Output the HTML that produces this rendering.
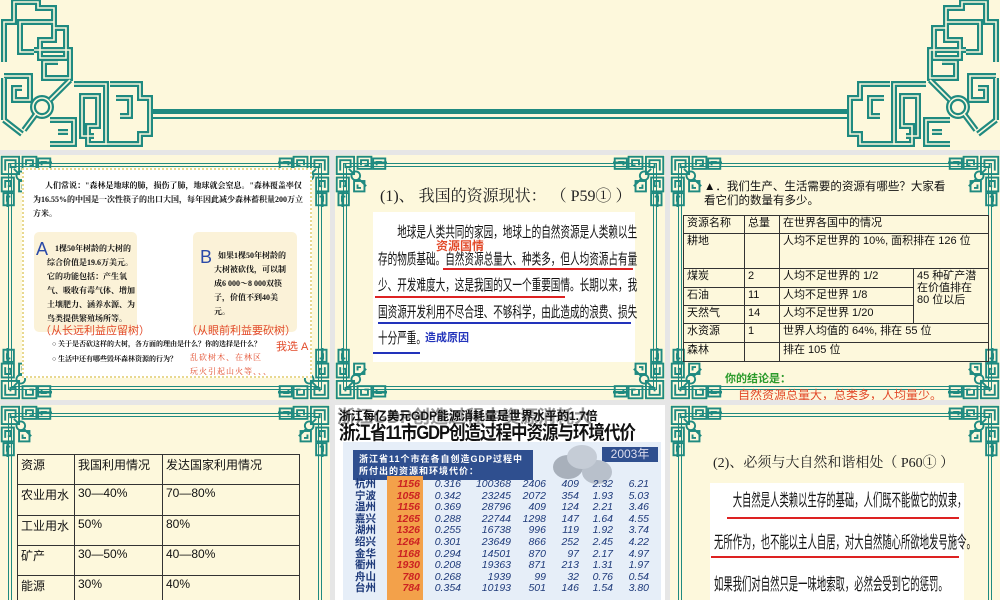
<!DOCTYPE html>
<html><head><meta charset="utf-8">
<style>
*{margin:0;padding:0;box-sizing:border-box}
html,body{width:1000px;height:600px;overflow:hidden}
body{background:#e6e6e6;position:relative;font-family:"Liberation Serif","Noto Serif CJK SC",serif;color:#111}
.a{position:absolute}
.panel{position:absolute;background:#fdf8dc;overflow:hidden}
.sans{font-family:"Liberation Sans","Noto Sans CJK SC",sans-serif}
table{border-collapse:collapse}
td{border:1px solid #333;vertical-align:top;padding:1px 3px}
.sq{font-family:"Noto Sans CJK SC",sans-serif;transform-origin:0 0;white-space:nowrap}
.nt td{border:none;padding:0;height:11.6px;line-height:11.6px;white-space:nowrap;text-align:right}
</style></head><body>
<svg width="0" height="0" style="position:absolute">
<defs>
<symbol id="orn" viewBox="0 0 60 60">
<g fill="none" stroke="#1f8a80" stroke-width="2.2">
<rect x="2" y="2" width="20" height="20"/><path d="M6 18V6h12v8h-6v-4"/>
<rect x="26" y="2" width="16" height="14"/><path d="M30 12V6h8v6h-4"/>
<rect x="44" y="4" width="14" height="12"/><path d="M48 12V8h6"/>
<rect x="2" y="26" width="14" height="16"/><path d="M6 38V30h6v6h-3"/>
<rect x="4" y="44" width="12" height="14"/><path d="M8 54V48h4"/>
<circle cx="24" cy="24" r="5"/><path d="M28 28l8 8M20 20l-4-4"/>
<rect x="22" y="30" width="12" height="12"/><path d="M30 38h-4v-4"/>
</g>
<path d="M42 9H60M9 42V60" stroke="#1f8a80" stroke-width="3"/>
</symbol>
<g id="big">
<g fill="none">
<path d="M4 62V22h10V2h24v6h16v20h12v30H40V40h14V22H20v30h14"/>
<path d="M34 50h36v28H44V62h14"/>
<path d="M4 76h26v24H14V88h8"/>
<path d="M4 120V78M4 120l18 14"/>
<path d="M50 120h24v24H50M58 132h10"/>
<path d="M74 84h32v60H88v-18h10v-30H82v40h12"/>
<path d="M110 84h30v14h10v36h-10v10h-50M116 98h14v18h-10"/>
<path d="M36 114L24 130M50 100l20-20"/>
<circle cx="42" cy="107" r="9"/>
</g>
</g>
</defs></svg>

<!-- top slide -->
<div class="panel" style="left:0;top:0;width:1000px;height:150px">
  <div class="a" style="left:150px;top:109px;width:700px;height:5px;background:#1f8a80"></div>
  <div class="a" style="left:150px;top:117px;width:700px;height:2px;background:#1f8a80"></div>
  <svg class="a" style="left:0;top:0" width="160" height="150">
    <use href="#big" stroke="#1f8a80" stroke-width="6"/>
    <g stroke="#fdf8dc" stroke-width="1.6"><use href="#big"/></g>
  </svg>
  <svg class="a" style="left:840px;top:0" width="160" height="150">
    <g transform="translate(160,0) scale(-1,1)">
    <use href="#big" stroke="#1f8a80" stroke-width="6"/>
    <g stroke="#fdf8dc" stroke-width="1.6"><use href="#big"/></g></g>
  </svg>
</div>

<!-- Panel 1 -->
<div class="panel" style="left:0;top:155px;width:330px;height:245px">
  <div class="a" style="left:8px;top:8px;width:314px;height:227px;border:4px double #1f8a80"></div>
  <svg class="a" style="left:0;top:0" width="52" height="52"><use href="#orn" width="52" height="52"/></svg>
  <svg class="a" style="left:278px;top:0" width="52" height="52"><use href="#orn" width="52" height="52" transform="translate(52,0) scale(-1,1)"/></svg>
  <svg class="a" style="left:0;top:193px" width="52" height="52"><use href="#orn" width="52" height="52" transform="translate(0,52) scale(1,-1)"/></svg>
  <svg class="a" style="left:278px;top:193px" width="52" height="52"><use href="#orn" width="52" height="52" transform="translate(52,52) scale(-1,-1)"/></svg>
  <div class="a" style="left:22px;top:13px;width:290px;height:210px;background:#fff;border:2px dotted #e8d890"></div>
  <div class="a" style="left:33px;top:24px;width:272px;font-size:8px;line-height:14px;font-weight:bold">&nbsp;&nbsp;&nbsp;&nbsp;&nbsp;&nbsp;人们常说："森林是地球的肺，损伤了肺，地球就会窒息。"森林覆盖率仅为16.55%的中国是一次性筷子的出口大国，每年因此减少森林蓄积量200万立方米。</div>
  <div class="a" style="left:34px;top:77px;width:103px;height:100px;background:#fbf2d8;border-radius:5px"></div>
  <div class="a" style="left:193px;top:77px;width:104px;height:100px;background:#fbf2d8;border-radius:5px"></div>
  <div class="a sans" style="left:36px;top:84px;font-size:18px;color:#2b4aa8">A</div>
  <div class="a sans" style="left:200px;top:92px;font-size:18px;color:#2b4aa8">B</div>
  <div class="a" style="left:47px;top:87px;width:88px;font-size:8px;line-height:14px;font-weight:bold">&nbsp;&nbsp;&nbsp;&nbsp;1棵50年树龄的大树的综合价值是19.6万美元。它的功能包括：产生氧气、吸收有毒气体、增加土壤肥力、涵养水源、为鸟类提供繁殖场所等。</div>
  <div class="a" style="left:214px;top:94px;width:75px;font-size:8px;line-height:14px;font-weight:bold">&nbsp;&nbsp;如果1棵50年树龄的大树被砍伐，可以制成6 000～8 000双筷子，价值不到40美元。</div>
  <div class="a sans" style="left:40px;top:167px;font-size:11px;color:#e24a2a">（从长远利益应留树）</div>
  <div class="a sans" style="left:186px;top:167px;font-size:11px;color:#e24a2a">（从眼前利益要砍树）</div>
  <div class="a" style="left:52px;top:184px;font-size:7px;font-weight:bold">○ 关于是否砍这样的大树，各方面的理由是什么？你的选择是什么？</div>
  <div class="a sans" style="left:276px;top:183px;font-size:11px;color:#e24a2a">我选 A</div>
  <div class="a" style="left:52px;top:199px;font-size:7px;font-weight:bold">○ 生活中还有哪些毁坏森林资源的行为？</div>
  <div class="a" style="left:190px;top:196px;font-size:8px;color:#e24a2a;letter-spacing:1px;line-height:14px">乱砍树木、在林区<br>玩火引起山火等、、、</div>
</div>

<!-- Panel 2 -->
<div class="panel" style="left:335px;top:155px;width:330px;height:245px">
  <div class="a" style="left:8px;top:8px;width:314px;height:227px;border:4px double #1f8a80"></div>
  <svg class="a" style="left:0;top:0" width="52" height="52"><use href="#orn" width="52" height="52"/></svg>
  <svg class="a" style="left:278px;top:0" width="52" height="52"><use href="#orn" width="52" height="52" transform="translate(52,0) scale(-1,1)"/></svg>
  <svg class="a" style="left:0;top:193px" width="52" height="52"><use href="#orn" width="52" height="52" transform="translate(0,52) scale(1,-1)"/></svg>
  <svg class="a" style="left:278px;top:193px" width="52" height="52"><use href="#orn" width="52" height="52" transform="translate(52,52) scale(-1,-1)"/></svg>
  <div class="a" style="left:45px;top:28px;font-size:16px;color:#222;white-space:nowrap">(1)、 我国的资源现状： （ P59① ）</div>
  <div class="a" style="left:38px;top:57px;width:262px;height:150px;background:#fff"></div>
  <div class="a sq" style="left:43px;top:64px;font-size:15px;line-height:26.5px;transform:scaleX(0.64)">　　地球是人类共同的家园，地球上的自然资源是人类赖以生<br>存的物质基础。自然资源总量大、种类多，但人均资源占有量<br>少、开发难度大，这是我国的又一个重要国情。长期以来，我<br>国资源开发利用不尽合理、不够科学，由此造成的浪费、损失<br>十分严重。</div>
  <div class="a sans" style="left:101px;top:82px;font-size:12px;color:#e24a2a;font-weight:bold">资源国情</div>
  <div class="a" style="left:108px;top:113px;width:190px;height:2px;background:#d22"></div>
  <div class="a" style="left:40px;top:141px;width:190px;height:2px;background:#d22"></div>
  <div class="a" style="left:43px;top:167px;width:253px;height:2px;background:#2233bb"></div>
  <div class="a" style="left:38px;top:197px;width:47px;height:2px;background:#2233bb"></div>
  <div class="a sans" style="left:90px;top:174px;font-size:11px;color:#2233bb;font-weight:bold">造成原因</div>
</div>

<!-- Panel 3 -->
<div class="panel" style="left:670px;top:155px;width:330px;height:245px">
  <div class="a" style="left:8px;top:8px;width:314px;height:227px;border:4px double #1f8a80"></div>
  <svg class="a" style="left:0;top:0" width="52" height="52"><use href="#orn" width="52" height="52"/></svg>
  <svg class="a" style="left:278px;top:0" width="52" height="52"><use href="#orn" width="52" height="52" transform="translate(52,0) scale(-1,1)"/></svg>
  <svg class="a" style="left:0;top:193px" width="52" height="52"><use href="#orn" width="52" height="52" transform="translate(0,52) scale(1,-1)"/></svg>
  <svg class="a" style="left:278px;top:193px" width="52" height="52"><use href="#orn" width="52" height="52" transform="translate(52,52) scale(-1,-1)"/></svg>
  <div class="a sans" style="left:34px;top:25px;width:260px;font-size:11.5px;line-height:14px;white-space:nowrap">▲．我们生产、生活需要的资源有哪些？大家看<br>看它们的数量有多少。</div>
  <table class="a sans" style="left:13px;top:60px;width:306px;font-size:11px;line-height:12px">
    <tr style="height:18px"><td style="width:61px">资源名称</td><td style="width:35px">总量</td><td colspan="2">在世界各国中的情况</td></tr>
    <tr style="height:35px"><td>耕地</td><td></td><td colspan="2">人均不足世界的 10%, 面积排在 126 位</td></tr>
    <tr style="height:19px"><td>煤炭</td><td>2</td><td style="width:134px">人均不足世界的 1/2</td><td rowspan="3">45 种矿产潜在价值排在 80 位以后</td></tr>
    <tr style="height:18px"><td>石油</td><td>11</td><td>人均不足世界 1/8</td></tr>
    <tr style="height:18px"><td>天然气</td><td>14</td><td>人均不足世界 1/20</td></tr>
    <tr style="height:19px"><td>水资源</td><td>1</td><td colspan="2">世界人均值的 64%, 排在 55 位</td></tr>
    <tr style="height:19px"><td>森林</td><td></td><td colspan="2">排在 105 位</td></tr>
  </table>
  <div class="a sans" style="left:55px;top:215px;font-size:11px;color:#2a9a2a;font-weight:bold">你的结论是：</div>
  <div class="a sans" style="left:68px;top:231px;font-size:12px;color:#e24a2a">自然资源总量大，总类多，人均量少。</div>
</div>

<!-- Panel 4 -->
<div class="panel" style="left:0;top:405px;width:330px;height:195px">
  <div class="a" style="left:8px;top:8px;width:314px;height:187px;border:4px double #1f8a80;border-bottom:none"></div>
  <svg class="a" style="left:0;top:0" width="52" height="52"><use href="#orn" width="52" height="52"/></svg>
  <svg class="a" style="left:278px;top:0" width="52" height="52"><use href="#orn" width="52" height="52" transform="translate(52,0) scale(-1,1)"/></svg>
  <table class="a sans" style="left:17px;top:49px;width:283px;font-size:12px;background:#fdf8dc">
    <tr style="height:30px"><td style="width:57px">资源</td><td style="width:88px">我国利用情况</td><td>发达国家利用情况</td></tr>
    <tr style="height:31px"><td>农业用水</td><td>30—40%</td><td>70—80%</td></tr>
    <tr style="height:30px"><td>工业用水</td><td>50%</td><td>80%</td></tr>
    <tr style="height:30px"><td>矿产</td><td>30—50%</td><td>40—80%</td></tr>
    <tr style="height:25px"><td style="border-bottom:none">能源</td><td style="border-bottom:none">30%</td><td style="border-bottom:none">40%</td></tr>
  </table>
</div>

<!-- Panel 5 -->
<div class="panel" style="left:335px;top:405px;width:330px;height:195px;background:#fff">
  <div class="a sans" style="left:2px;top:-2px;font-size:18px;font-weight:bold;color:#555;white-space:nowrap;opacity:.6">浙江GDP创造过程中资源消耗大</div>
  <div class="a sans" style="left:4px;top:2px;font-size:12px;font-weight:bold;white-space:nowrap">浙江每亿美元GDP能源消耗量是世界水平的1.7倍</div>
  <div class="a sans" style="left:4px;top:13px;font-size:19px;font-weight:bold;white-space:nowrap;letter-spacing:-1.2px;transform:scaleX(0.87);transform-origin:0 0">浙江省11市GDP创造过程中资源与环境代价</div>
  <div class="a" style="left:8px;top:37px;width:318px;height:158px;background:#e6eef8"></div>
  <div class="a sans" style="left:18px;top:45px;width:180px;height:30px;background:#2f4f8f;color:#fff;font-size:9px;font-weight:bold;line-height:12px;padding:3px 6px;letter-spacing:1px">浙江省11个市在各自创造GDP过程中所付出的资源和环境代价：</div>
  <div class="a sans" style="left:267px;top:42px;width:56px;height:15px;background:#2f4f8f;color:#dde;font-size:12px;line-height:15px;text-align:center">2003年</div>
  <div class="a" style="left:218px;top:50px;width:30px;height:24px;border-radius:50%;background:#a8b0bb"></div>
  <div class="a" style="left:247px;top:55px;width:30px;height:24px;border-radius:50%;background:#b8c0cb"></div>
  <div class="a" style="left:232px;top:40px;width:30px;height:24px;border-radius:50%;background:#c5ccd6"></div>
  <div class="a" style="left:52px;top:71px;width:36px;height:124px;background:#f3a14a"></div>
  <table class="a sans nt" style="left:20px;top:74px;font-size:10.5px;color:#1e3a7a;font-style:italic">
  <colgroup><col style="width:24px"><col style="width:41px"><col style="width:41px"><col style="width:50px"><col style="width:35px"><col style="width:33px"><col style="width:34px"><col style="width:36px"></colgroup>
  <tr><td style="text-align:left;font-style:normal;font-weight:bold">杭州</td><td style="color:#c22;font-weight:bold">1156</td><td>0.316</td><td>100368</td><td>2406</td><td>409</td><td>2.32</td><td>6.21</td></tr>
  <tr><td style="text-align:left;font-style:normal;font-weight:bold">宁波</td><td style="color:#c22;font-weight:bold">1058</td><td>0.342</td><td>23245</td><td>2072</td><td>354</td><td>1.93</td><td>5.03</td></tr>
  <tr><td style="text-align:left;font-style:normal;font-weight:bold">温州</td><td style="color:#c22;font-weight:bold">1156</td><td>0.369</td><td>28796</td><td>409</td><td>124</td><td>2.21</td><td>3.46</td></tr>
  <tr><td style="text-align:left;font-style:normal;font-weight:bold">嘉兴</td><td style="color:#c22;font-weight:bold">1265</td><td>0.288</td><td>22744</td><td>1298</td><td>147</td><td>1.64</td><td>4.55</td></tr>
  <tr><td style="text-align:left;font-style:normal;font-weight:bold">湖州</td><td style="color:#c22;font-weight:bold">1326</td><td>0.255</td><td>16738</td><td>996</td><td>119</td><td>1.92</td><td>3.74</td></tr>
  <tr><td style="text-align:left;font-style:normal;font-weight:bold">绍兴</td><td style="color:#c22;font-weight:bold">1264</td><td>0.301</td><td>23649</td><td>866</td><td>252</td><td>2.45</td><td>4.22</td></tr>
  <tr><td style="text-align:left;font-style:normal;font-weight:bold">金华</td><td style="color:#c22;font-weight:bold">1168</td><td>0.294</td><td>14501</td><td>870</td><td>97</td><td>2.17</td><td>4.97</td></tr>
  <tr><td style="text-align:left;font-style:normal;font-weight:bold">衢州</td><td style="color:#c22;font-weight:bold">1930</td><td>0.208</td><td>19363</td><td>871</td><td>213</td><td>1.31</td><td>1.97</td></tr>
  <tr><td style="text-align:left;font-style:normal;font-weight:bold">舟山</td><td style="color:#c22;font-weight:bold">780</td><td>0.268</td><td>1939</td><td>99</td><td>32</td><td>0.76</td><td>0.54</td></tr>
  <tr><td style="text-align:left;font-style:normal;font-weight:bold">台州</td><td style="color:#c22;font-weight:bold">784</td><td>0.354</td><td>10193</td><td>501</td><td>146</td><td>1.54</td><td>3.80</td></tr>
  </table>
</div>

<!-- Panel 6 -->
<div class="panel" style="left:670px;top:405px;width:330px;height:195px">
  <div class="a" style="left:8px;top:8px;width:314px;height:187px;border:4px double #1f8a80;border-bottom:none"></div>
  <svg class="a" style="left:0;top:0" width="52" height="52"><use href="#orn" width="52" height="52"/></svg>
  <svg class="a" style="left:278px;top:0" width="52" height="52"><use href="#orn" width="52" height="52" transform="translate(52,0) scale(-1,1)"/></svg>
  <div class="a" style="left:43px;top:47px;font-size:14px;color:#222;white-space:nowrap">(2)、必须与大自然和谐相处（ P60① ）</div>
  <div class="a" style="left:40px;top:78px;width:254px;height:117px;background:#fff"></div>
  <div class="a sq" style="left:44px;top:73px;font-size:17px;line-height:42px;transform:scaleX(0.55)">　　大自然是人类赖以生存的基础，人们既不能做它的奴隶，<br>无所作为，也不能以主人自居，对大自然随心所欲地发号施令。<br>如果我们对自然只是一味地索取，必然会受到它的惩罚。</div>
  <div class="a" style="left:57px;top:112px;width:232px;height:2px;background:#d22"></div>
  <div class="a" style="left:41px;top:151px;width:248px;height:2px;background:#d22"></div>
</div>
</body></html>
